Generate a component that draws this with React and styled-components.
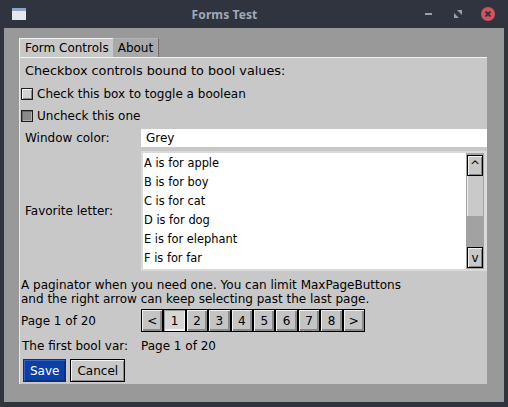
import React from "react";
import styled, { createGlobalStyle } from "styled-components";

const Global = createGlobalStyle`
  html, body { margin: 0; padding: 0; background: #2f343f; }
  body { font-family: "DejaVu Sans", "Liberation Sans", sans-serif; }
`;

const Win = styled.div`
  width: 508px;
  height: 407px;
  background: #2f343f;
  display: flex;
  flex-direction: column;
  box-sizing: border-box;
`;

const TitleBar = styled.div`
  height: 28px;
  display: flex;
  align-items: center;
  padding: 0 13px 0 12px;
  box-sizing: border-box;
`;

const AppIcon = styled.div`
  width: 14px;
  height: 12px;
  background: #e6e8ec;
  border-top: 3px solid #8ea3c9;
  box-sizing: border-box;
`;

const Title = styled.div`
  flex: 1;
  text-align: center;
  padding-left: 2px;
  font-family: "Noto Sans", "DejaVu Sans", sans-serif;
  font-weight: bold;
  font-size: 12px;
  color: #a3a9b5;
  letter-spacing: 0.1px;
`;

const Controls = styled.div`
  display: flex;
  align-items: center;
  gap: 16px;
`;

const CtlSlot = styled.div`
  width: 14px;
  height: 16px;
  display: flex;
  align-items: center;
  justify-content: center;
`;

const CloseBtn = styled.div`
  width: 14px;
  height: 14px;
  border-radius: 50%;
  background: #d3545b;
  display: flex;
  align-items: center;
  justify-content: center;
`;

const Body = styled.div`
  flex: 1;
  margin: 0 4px 5px 4px;
  background: #999999;
  padding: 10px 17px 0 15px;
  display: flex;
  flex-direction: column;
`;

const TabRow = styled.div`
  display: flex;
  height: 19px;
`;

const Tab = styled.div`
  height: 19px;
  box-sizing: border-box;
  padding: 0 ${(p) => (p.active ? 4 : 5)}px 0 5px;
  font-size: 12px;
  line-height: 19px;
  color: #000;
  background: ${(p) => (p.active ? "#c8c8c8" : "#a9a9a9")};
  border-top: 1px solid ${(p) => (p.active ? "#f2f2f2" : "#b4b4b4")};
  border-left: ${(p) => (p.active ? "1px solid #f2f2f2" : "none")};
  border-right: ${(p) => (p.active ? "none" : "1px solid #6e6e6e")};
`;

const Panel = styled.div`
  background: #c8c8c8;
  border-top: 1px solid #f2f2f2;
  border-left: 1px solid #e8e8e8;
  display: flex;
  flex-direction: column;
  font-size: 12px;
  color: #000;
  padding-bottom: 2px;
`;

const Heading = styled.div`
  height: 25px;
  display: flex;
  align-items: center;
  padding-left: 5px;
  font-size: 12.8px;
`;

const CheckRow = styled.label`
  height: ${(p) => p.h}px;
  display: flex;
  align-items: center;
  gap: 4px;
  padding-left: 1px;
`;

const Box = styled.span`
  width: 12px;
  height: 12px;
  box-sizing: border-box;
  border: 1px solid #1e1e1e;
  background: ${(p) => (p.checked ? "#8a8a8a" : "#d2d2d2")};
  box-shadow: ${(p) =>
    p.checked
      ? "inset 1px 1px 0 #6a6a6a, inset -1px -1px 0 #b0b0b0"
      : "inset 1px 1px 0 #f4f4f4, inset -1px -1px 0 #8a8a8a"};
`;

const FormRow = styled.div`
  display: grid;
  grid-template-columns: 121px 1fr;
  align-items: center;
  margin-top: ${(p) => p.mt || 0}px;
`;

const Label = styled.div`
  padding-left: ${(p) => (p.pl != null ? p.pl : 5)}px;
`;

const Input = styled.div`
  height: 18px;
  background: #fff;
  display: flex;
  align-items: center;
  padding-left: 5px;
  box-sizing: border-box;
`;

const ListBox = styled.div`
  height: 120px;
  box-sizing: border-box;
  border: 2px solid #dadada;
  border-right-width: 3px;
  background: #fff;
  display: flex;
`;

const Items = styled.div`
  flex: 1;
  font-size: 11.4px;
  padding-top: 1px;
`;

const Item = styled.div`
  height: 19px;
  line-height: 19px;
  padding-left: 1px;
`;

const ScrollBar = styled.div`
  width: 18px;
  box-sizing: border-box;
  background: #a2a2a2;
  padding: 2px 1px 1px 1px;
  display: flex;
  flex-direction: column;
`;

const SBtn = styled.div`
  height: 21px;
  box-sizing: border-box;
  border: 1px solid #000;
  background: #c8c8c8;
  box-shadow: inset 1px 1px 0 #f2f2f2, inset -1px -1px 0 #858585;
  font-size: 12px;
  display: flex;
  align-items: center;
  justify-content: center;
  line-height: 1;
`;

const Thumb = styled.div`
  height: 40px;
  background: #c9c9c9;
  box-shadow: inset 1px 0 0 #efefef;
`;

const Track = styled.div`
  flex: 1;
`;

const Para = styled.div`
  margin-top: 7px;
  line-height: 14px;
  padding-left: 1px;
`;

const Pager = styled.div`
  display: flex;
  width: 224px;
  height: 23px;
`;

const PBtn = styled.div`
  flex: 1;
  box-sizing: border-box;
  border: 1px solid #000;
  background: ${(p) => (p.sel ? "#d6d6d6" : "#c4c4c4")};
  box-shadow: ${(p) =>
    p.sel
      ? "inset 1px 1px 0 #9a9a9a, inset -1px -2px 0 #f4f4f4"
      : "inset 1px 1px 0 #f2f2f2, inset -2px -2px 0 #8a8a8a"};
  display: flex;
  align-items: center;
  justify-content: center;
`;

const Actions = styled.div`
  display: flex;
  gap: 4px;
  margin-top: 6px;
  padding-left: 3px;
`;

const Button = styled.div`
  height: 23px;
  box-sizing: border-box;
  padding: 0 6px;
  display: flex;
  align-items: center;
  border: 1px solid ${(p) => (p.primary ? "#1c2d66" : "#000")};
  background: ${(p) => (p.primary ? "#0d40a6" : "#c8c8c8")};
  color: ${(p) => (p.primary ? "#fff" : "#000")};
  box-shadow: ${(p) =>
    p.primary
      ? "inset 1px 1px 0 #3563c4, inset -1px -1px 0 #0a2f7c"
      : "inset 1px 1px 0 #f4f4f4, inset -1px -1px 0 #8a8a8a"};
`;

const letters = [
  "A is for apple",
  "B is for boy",
  "C is for cat",
  "D is for dog",
  "E is for elephant",
  "F is for far",
];

const pages = ["<", "1", "2", "3", "4", "5", "6", "7", "8", ">"];

export default function App() {
  return (
    <Win>
      <Global />
      <TitleBar>
        <AppIcon />
        <Title>Forms Test</Title>
        <Controls>
          <CtlSlot>
            <svg width="7" height="3"><rect x="0" y="0" width="7" height="2" fill="#9aa1ad" /></svg>
          </CtlSlot>
          <CtlSlot>
            <svg width="8" height="8" viewBox="0 0 8 8">
              <path d="M3 0H8V5Z" fill="#9aa1ad" />
              <path d="M0 3V8H5Z" fill="#9aa1ad" />
            </svg>
          </CtlSlot>
          <CtlSlot>
            <CloseBtn>
              <svg width="8" height="8" viewBox="0 0 8 8">
                <path d="M1.5 1.5L6.5 6.5M6.5 1.5L1.5 6.5" stroke="#2f343f" strokeWidth="1.8" />
              </svg>
            </CloseBtn>
          </CtlSlot>
        </Controls>
      </TitleBar>
      <Body>
        <TabRow>
          <Tab active>Form Controls</Tab>
          <Tab>About</Tab>
        </TabRow>
        <Panel>
          <Heading>Checkbox controls bound to bool values:</Heading>
          <CheckRow h={21}>
            <Box />
            Check this box to toggle a boolean
          </CheckRow>
          <CheckRow h={23}>
            <Box checked />
            Uncheck this one
          </CheckRow>
          <FormRow mt={2}>
            <Label>Window color:</Label>
            <Input>Grey</Input>
          </FormRow>
          <FormRow mt={4}>
            <Label>Favorite letter:</Label>
            <ListBox>
              <Items>
                {letters.map((l) => (
                  <Item key={l}>{l}</Item>
                ))}
              </Items>
              <ScrollBar>
                <SBtn>^</SBtn>
                <Thumb />
                <Track />
                <SBtn>v</SBtn>
              </ScrollBar>
            </ListBox>
          </FormRow>
          <Para>
            A paginator when you need one. You can limit MaxPageButtons
            <br />
            and the right arrow can keep selecting past the last page.
          </Para>
          <FormRow mt={3}>
            <Label pl={1}>Page 1 of 20</Label>
            <Pager>
              {pages.map((p, i) => (
                <PBtn key={i} sel={p === "1"}>
                  {p}
                </PBtn>
              ))}
            </Pager>
          </FormRow>
          <FormRow mt={7}>
            <Label pl={2}>The first bool var:</Label>
            <div>Page 1 of 20</div>
          </FormRow>
          <Actions>
            <Button primary>Save</Button>
            <Button>Cancel</Button>
          </Actions>
        </Panel>
      </Body>
    </Win>
  );
}
